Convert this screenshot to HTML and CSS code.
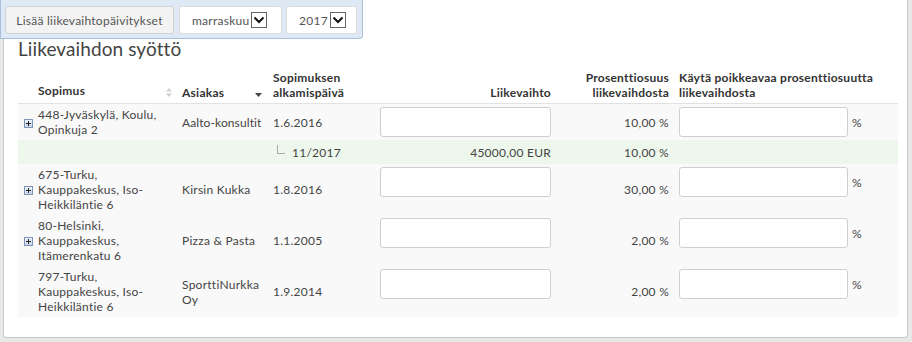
FILE: index.html
```html
<!DOCTYPE html>
<html lang="fi">
<head>
    <meta charset="UTF-8">
    <title>Liikevaihdon syöttö</title>
    <link rel="stylesheet" href="styles.css">
</head>
<body>
    <div class="toolbar">
        <button class="btn">Lisää liikevaihtopäivitykset</button>
        <div class="picker picker-month">marraskuu<span class="drop"><svg width="12" height="8" viewBox="0 0 12 8"><path d="M1.5 1.5 L6 6 L10.5 1.5" fill="none" stroke="#111" stroke-width="2"/></svg></span></div>
        <div class="picker picker-year">2017<span class="drop"><svg width="12" height="8" viewBox="0 0 12 8"><path d="M1.5 1.5 L6 6 L10.5 1.5" fill="none" stroke="#111" stroke-width="2"/></svg></span></div>
    </div>

    <div class="panel">
        <h2 class="title">Liikevaihdon syöttö</h2>

        <table class="grid">
            <colgroup>
                <col style="width:15px">
                <col style="width:144px">
                <col style="width:91px">
                <col style="width:107px">
                <col style="width:181px">
                <col style="width:118px">
                <col style="width:224px">
            </colgroup>
            <thead>
                <tr>
                    <th></th>
                    <th>Sopimus<span class="sort sort-both"><svg width="6" height="9" viewBox="0 0 6 9"><path d="M3 0 L6 3.5 L0 3.5 Z M3 9 L6 5.5 L0 5.5 Z" fill="#d0d0d0"/></svg></span></th>
                    <th>Asiakas<span class="sort sort-down"><svg width="7" height="4" viewBox="0 0 7 4"><path d="M0 0 L7 0 L3.5 4 Z" fill="#444"/></svg></span></th>
                    <th>Sopimuksen alkamispäivä</th>
                    <th class="num">Liikevaihto</th>
                    <th class="num">Prosenttiosuus liikevaihdosta</th>
                    <th>Käytä poikkeavaa prosenttiosuutta liikevaihdosta</th>
                </tr>
            </thead>
            <tbody>
                <tr class="row">
                    <td class="exp"><span class="plus"></span></td>
                    <td>448-Jyväskylä, Koulu, Opinkuja 2</td>
                    <td class="nowrap">Aalto-konsultit</td>
                    <td>1.6.2016</td>
                    <td class="field"><input class="inp inp-amount" type="text"></td>
                    <td class="num">10,00 %</td>
                    <td class="field"><input class="inp inp-pct" type="text"><span class="unit">%</span></td>
                </tr>
                <tr class="child">
                    <td></td>
                    <td></td>
                    <td></td>
                    <td><span class="branch"></span>11/2017</td>
                    <td class="num">45000,00 EUR</td>
                    <td class="num">10,00 %</td>
                    <td></td>
                </tr>
                <tr class="row">
                    <td class="exp"><span class="plus"></span></td>
                    <td>675-Turku, Kauppakeskus, Iso-Heikkiläntie 6</td>
                    <td>Kirsin Kukka</td>
                    <td>1.8.2016</td>
                    <td class="field"><input class="inp inp-amount" type="text"></td>
                    <td class="num">30,00 %</td>
                    <td class="field"><input class="inp inp-pct" type="text"><span class="unit">%</span></td>
                </tr>
                <tr class="row">
                    <td class="exp"><span class="plus"></span></td>
                    <td>80-Helsinki, Kauppakeskus, Itämerenkatu 6</td>
                    <td>Pizza &amp; Pasta</td>
                    <td>1.1.2005</td>
                    <td class="field"><input class="inp inp-amount" type="text"></td>
                    <td class="num">2,00 %</td>
                    <td class="field"><input class="inp inp-pct" type="text"><span class="unit">%</span></td>
                </tr>
                <tr class="row">
                    <td class="exp"></td>
                    <td>797-Turku, Kauppakeskus, Iso-Heikkiläntie 6</td>
                    <td>SporttiNurkka Oy</td>
                    <td>1.9.2014</td>
                    <td class="field"><input class="inp inp-amount" type="text"></td>
                    <td class="num">2,00 %</td>
                    <td class="field"><input class="inp inp-pct" type="text"><span class="unit">%</span></td>
                </tr>
            </tbody>
        </table>
    </div>
</body>
</html>
```

FILE: styles.css
```css
/* Base */
* {
    box-sizing: border-box;
}

body {
    margin: 0;
    background: #e8e8e8;
    font-family: Lato, "Noto Sans", sans-serif;
    font-size: 12px;
    line-height: 15px;
    letter-spacing: 0.25px;
    color: #444;
    height: 342px;
    overflow: hidden;
}

/* Floating toolbar */
.toolbar {
    position: absolute;
    top: 0;
    left: 0;
    z-index: 2;
    display: flex;
    gap: 5px;
    padding: 5px 5px 4px 4px;
    background: #dfe9f5;
    border: 1px solid #a9bfdb;
    border-top: none;
    border-radius: 0 0 4px 0;
}

.btn {
    height: 28px;
    width: 169px;
    margin-top: 1px;
    padding: 0;
    font: inherit;
    letter-spacing: inherit;
    color: #555;
    background: #f3f3f3;
    border: 1px solid #d2d2d2;
    border-radius: 3px;
}

.picker {
    display: flex;
    align-items: center;
    height: 28px;
    margin-top: 1px;
    padding: 0 0 0 12px;
    background: #fff;
    border: 1px solid #dcdcdc;
    border-radius: 3px;
    color: #555;
}

.picker-month {
    width: 103px;
    margin-right: -1px;
}

.picker-year {
    width: 71px;
}

.drop {
    display: flex;
    align-items: center;
    justify-content: center;
    width: 16px;
    height: 16px;
    margin-left: 2px;
    border: 1px solid #666;
    background: #fff;
}

/* Panel */
.panel {
    margin: 0 4px 0 3px;
    height: 338px;
    padding: 37px 9px 0 14px;
    background: #fff;
    border: 1px solid #c9c9c9;
    border-top: none;
    border-radius: 0 0 4px 4px;
}

.title {
    margin: 0 0 9px 0;
    font-size: 19px;
    line-height: 24px;
    font-weight: normal;
    letter-spacing: 0.1px;
    color: #444;
}

/* Grid */
.grid {
    width: 880px;
    border-collapse: collapse;
    table-layout: fixed;
}

.grid th {
    padding: 0 5px 3px;
    text-align: left;
    vertical-align: bottom;
    font-weight: bold;
    color: #333;
    border-bottom: 1px solid #e2e2e2;
}

.grid td {
    padding: 3px 5px;
    vertical-align: middle;
}

.grid .num {
    text-align: right;
}

.grid td.field {
    vertical-align: top;
}

.grid td.nowrap {
    white-space: nowrap;
    letter-spacing: 0.1px;
}

.row td {
    background: #f9f9f9;
}

.child td {
    background: #eef7ec;
    padding-top: 5px;
    padding-bottom: 4px;
}

.exp {
    padding: 0 !important;
    text-align: right;
}

.plus {
    display: inline-block;
    width: 9px;
    height: 9px;
    border: 1px solid #7f93b4;
    background: linear-gradient(#eef3fb, #c6d4ea);
    position: relative;
    vertical-align: middle;
}

.plus::before,
.plus::after {
    content: "";
    position: absolute;
    background: #222;
}

.plus::before {
    left: 1px;
    top: 3px;
    width: 5px;
    height: 1px;
}

.plus::after {
    left: 3px;
    top: 1px;
    width: 1px;
    height: 5px;
}

.sort {
    float: right;
    margin-top: 2px;
}

.sort-down {
    margin-top: 0;
    margin-right: 1px;
}

.branch {
    display: inline-block;
    width: 8px;
    height: 9px;
    margin: 0 7px 3px 4px;
    border-left: 1px solid #aaa;
    border-bottom: 1px solid #aaa;
}

.inp {
    height: 30px;
    border: 1px solid #cfcfcf;
    border-radius: 3px;
    background: #fff;
    font: inherit;
}

.inp-amount {
    width: 171px;
}

.inp-pct {
    width: 169px;
}

.unit {
    margin-left: 4px;
}
```
